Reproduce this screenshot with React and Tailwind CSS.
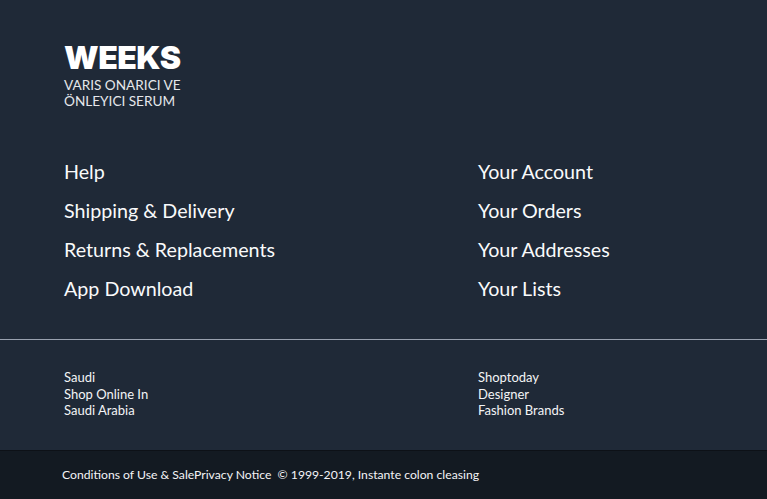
import React from 'react';

const helpLinks = ['Help', 'Shipping & Delivery', 'Returns & Replacements', 'App Download'];
const accountLinks = ['Your Account', 'Your Orders', 'Your Addresses', 'Your Lists'];

export default function App() {
  return (
    <footer
      className="w-[767px] h-[499px] bg-[#1f2937] text-white flex flex-col overflow-hidden"
      style={{ fontFamily: 'Lato, "Open Sans", sans-serif' }}
    >
      {/* Brand + links */}
      <div className="h-[339px] px-16 pt-[41px]">
        <div>
          <h1 className="text-[32px] leading-[34px] font-black tracking-[-0.5px]" style={{ fontFamily: 'Inter, sans-serif' }}>
            WEEKS
          </h1>
          <p className="mt-[3px] text-[13.6px] leading-[15.5px] text-gray-200 uppercase">
            Varis onarıcı ve
            <br />
            önleyici serum
          </p>
        </div>

        <div className="mt-[51px] grid grid-cols-[414px_1fr]">
          <ul className="flex flex-col gap-[15px]">
            {helpLinks.map(l => (
              <li key={l} className="text-[19.7px] leading-[24px] text-gray-50">{l}</li>
            ))}
          </ul>
          <ul className="flex flex-col gap-[15px]">
            {accountLinks.map(l => (
              <li key={l} className="text-[19.7px] leading-[24px] text-gray-50">{l}</li>
            ))}
          </ul>
        </div>
      </div>

      {/* Divider */}
      <div className="h-px bg-gray-400" />

      {/* Regional */}
      <div className="h-[110px] px-16 pt-[29px] grid grid-cols-[414px_1fr] text-[13px] leading-[16.5px] text-gray-100">
        <div>
          <p>Saudi</p>
          <p>Shop Online In</p>
          <p>Saudi Arabia</p>
        </div>
        <div>
          <p>Shoptoday</p>
          <p>Designer</p>
          <p>Fashion Brands</p>
        </div>
      </div>

      {/* Bottom bar */}
      <div className="flex-1 bg-[#131a22] border-t border-[#0d1117] px-[62px] flex items-center">
        <p className="text-[12.2px] text-gray-100">
          Conditions of Use &amp; SalePrivacy Notice&nbsp; © 1999-2019, Instante colon cleasing
        </p>
      </div>
    </footer>
  );
}
